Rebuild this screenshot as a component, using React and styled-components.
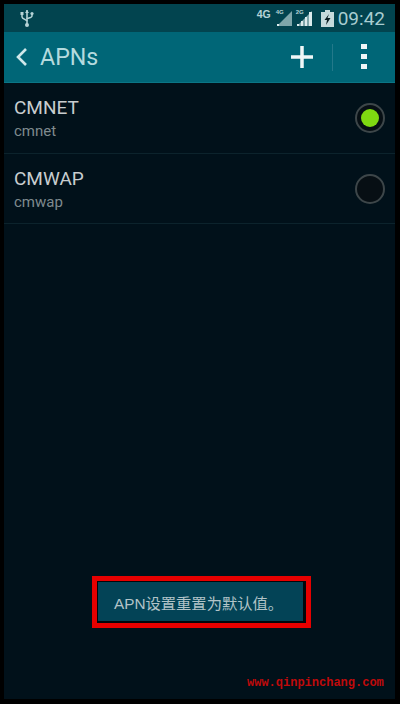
import React from 'react'
import styled, { createGlobalStyle } from 'styled-components'

const GlobalStyle = createGlobalStyle`
  html, body {
    margin: 0;
    padding: 0;
    background: #000;
  }
  * { box-sizing: border-box; }
`

const Screen = styled.div`
  position: relative;
  width: 391px;
  height: 695px;
  margin: 4px 0 0 4px;
  background: #01111a;
  display: flex;
  flex-direction: column;
  font-family: "Liberation Sans", Roboto, "Noto Sans CJK SC", sans-serif;
  overflow: hidden;
`

const StatusBar = styled.div`
  height: 28px;
  flex-shrink: 0;
  background: #02444f;
  display: flex;
  align-items: center;
  padding: 0 10px 0 16px;
  color: #a9cfd2;
`

const StatusRight = styled.div`
  margin-left: auto;
  display: flex;
  align-items: center;
`

const NetLabel = styled.span`
  width: 19px;
  font-size: 10.5px;
  font-weight: 700;
  color: #b6d3d6;
  margin-top: -9px;
`

const SignalGroup = styled.div`
  position: relative;
  width: 17px;
  height: 17px;
  margin-right: ${props => props.gap}px;
`

const NetTiny = styled.span`
  position: absolute;
  left: 0;
  top: -1px;
  font-size: 6px;
  font-weight: 700;
  color: #b6d3d6;
`

const Clock = styled.span`
  font-size: 19px;
  color: #a8cdd1;
  margin-left: 4px;
  font-family: Roboto, sans-serif;
`

const AppBar = styled.div`
  height: 51px;
  flex-shrink: 0;
  background: #006677;
  border-bottom: 1px solid #0b7686;
  display: flex;
  align-items: center;
  padding: 0 0 0 11px;
`

const Title = styled.span`
  font-size: 23.2px;
  color: #b4dade;
  margin-left: 11px;
  font-family: Roboto, sans-serif;
`

const Actions = styled.div`
  margin-left: auto;
  display: flex;
  align-items: center;
  padding-right: 28px;
`

const Divider = styled.div`
  width: 1px;
  height: 27px;
  background: #23798a;
  margin: 0 28px 0 19px;
`

const List = styled.div`
  display: flex;
  flex-direction: column;
`

const Row = styled.div`
  height: 70px;
  display: flex;
  align-items: center;
  padding: 0 10px 0 10px;
  border-bottom: 1px solid #0c232c;
  &:first-child {
    height: 71px;
  }
`

const RowText = styled.div`
  flex: 1;
  display: flex;
  flex-direction: column;
  gap: 5px;
`

const RowTitle = styled.span`
  font-size: 19px;
  line-height: 21px;
  color: #c8cdcf;
  font-family: Roboto, sans-serif;
`

const RowSub = styled.span`
  font-size: 15px;
  line-height: 16px;
  color: #7f8a8e;
  font-family: Roboto, sans-serif;
`

const Radio = styled.div`
  width: 30px;
  height: 30px;
  border-radius: 50%;
  border: 2px solid #3d4649;
  background: #070f14;
  display: flex;
  align-items: center;
  justify-content: center;
`

const RadioDot = styled.div`
  width: 18px;
  height: 18px;
  border-radius: 50%;
  background: #7fd911;
`

const Highlight = styled.div`
  position: absolute;
  left: 88px;
  top: 572px;
  width: 219px;
  height: 52px;
  border: 5px solid #e60000;
  padding: 1px 3px 2px 1px;
  background: #01070c;
`

const Toast = styled.div`
  height: 100%;
  background: #034356;
  display: flex;
  align-items: center;
  padding-left: 16px;
  font-size: 15.3px;
  color: #b2c4c8;
`

const Watermark = styled.div`
  position: absolute;
  left: 243px;
  top: 672px;
  font-family: "Liberation Mono", monospace;
  font-size: 12px;
  font-weight: 700;
  color: #c00a0a;
  white-space: nowrap;
`

const UsbIcon = () => (
  <svg width="14" height="18" viewBox="0 0 14 18" fill="none">
    <path d="M7 1v16" stroke="#b6d3d6" strokeWidth="1.6" />
    <path d="M5 4l2-3 2 3z" fill="#b6d3d6" />
    <path d="M2 5v3c0 2 5 3 5 4M12 5v2c0 2-5 2-5 3" stroke="#b6d3d6" strokeWidth="1.5" />
    <rect x="0.5" y="3" width="3" height="3" fill="#b6d3d6" />
    <circle cx="12" cy="4.5" r="1.6" fill="#b6d3d6" />
    <circle cx="7" cy="16" r="2" fill="#b6d3d6" />
  </svg>
)

const SignalIcon = ({ filled }) => (
  <svg width="17" height="17" viewBox="0 0 17 17">
    <path d="M1 16L16 1v15z" fill="#7fa6aa" />
    {filled
      ? <path d="M1 16h2v-2H1zM5 16h2v-5H5zM9 16h2V7H9zM13 16h3V2h-3z" fill="#dcebed" />
      : <path d="M1 16h2v-2H1z" fill="#dcebed" />}
  </svg>
)

const BatteryIcon = () => (
  <svg width="13" height="17" viewBox="0 0 13 17">
    <rect x="4" y="0" width="5" height="2" fill="#c6dadc" />
    <rect x="0" y="2" width="13" height="15" fill="#c6dadc" />
    <path d="M8 4L3.500 10h2.500l-1 5 4.500-7H6.500z" fill="#0b1d22" />
  </svg>
)

const BackIcon = () => (
  <svg width="14" height="20" viewBox="0 0 14 20" fill="none">
    <path d="M11 2L3 10l8 8" stroke="#cfe8ea" strokeWidth="2.6" />
  </svg>
)

const PlusIcon = () => (
  <svg width="22" height="22" viewBox="0 0 22 22">
    <path d="M9.250 0h3.500v9.250H22v3.500h-9.250V22h-3.500v-9.250H0v-3.500h9.250z" fill="#f0f7f8" />
  </svg>
)

const MoreIcon = () => (
  <svg width="6" height="26" viewBox="0 0 6 26">
    <path d="M0 0h6v5H0zM0 10h6v5H0zM0 20h6v5H0z" fill="#f0f7f8" />
  </svg>
)

const apns = [
  { name: 'CMNET', sub: 'cmnet', on: true },
  { name: 'CMWAP', sub: 'cmwap', on: false },
]

const App = () => {
  return (
    <>
      <GlobalStyle />
      <Screen>
        <StatusBar>
          <UsbIcon />
          <StatusRight>
            <NetLabel>4G</NetLabel>
            <SignalGroup gap={3}>
              <SignalIcon />
              <NetTiny>4G</NetTiny>
            </SignalGroup>
            <SignalGroup gap={8}>
              <SignalIcon filled />
              <NetTiny>2G</NetTiny>
            </SignalGroup>
            <BatteryIcon />
            <Clock>09:42</Clock>
          </StatusRight>
        </StatusBar>
        <AppBar>
          <BackIcon />
          <Title>APNs</Title>
          <Actions>
            <PlusIcon />
            <Divider />
            <MoreIcon />
          </Actions>
        </AppBar>
        <List>
          {apns.map((a) => (
            <Row key={a.name}>
              <RowText>
                <RowTitle>{a.name}</RowTitle>
                <RowSub>{a.sub}</RowSub>
              </RowText>
              <Radio>{a.on && <RadioDot />}</Radio>
            </Row>
          ))}
        </List>
        <Highlight>
          <Toast>APN设置重置为默认值。</Toast>
        </Highlight>
        <Watermark>www.qinpinchang.com</Watermark>
      </Screen>
    </>
  )
}

export default App
